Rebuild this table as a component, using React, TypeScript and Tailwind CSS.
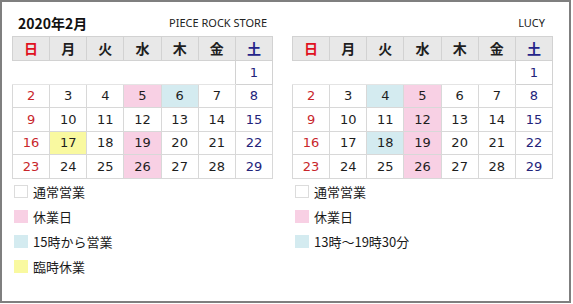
const jp = '"Noto Sans CJK JP", "Noto Sans", sans-serif';
const num = '"DejaVu Sans", Verdana, sans-serif';

type Mark = "pink" | "blue" | "yellow";

const bgOf: Record<Mark, string> = {
  pink: "bg-[#f8d0e4]",
  blue: "bg-[#d4ebf0]",
  yellow: "bg-[#f9f9a0]",
};

const weekdays = ["日", "月", "火", "水", "木", "金", "土"];

const rows = [
  [2, 3, 4, 5, 6, 7, 8],
  [9, 10, 11, 12, 13, 14, 15],
  [16, 17, 18, 19, 20, 21, 22],
  [23, 24, 25, 26, 27, 28, 29],
];

function numColor(col: number) {
  if (col === 0) return "text-[#c8262b]";
  if (col === 6) return "text-[#23237a]";
  return "text-[#1e1e1e]";
}

function Calendar({ marks }: { marks: Record<number, Mark> }) {
  return (
    <table className="w-[261px] table-fixed border-collapse">
      <thead>
        <tr className="h-[24px]">
          {weekdays.map((d, i) => (
            <th
              key={d}
              className={`border border-[#d2d2d2] bg-[#e8e8e8] p-0 text-[14px] font-bold ${
                i === 0 ? "text-[#e01020]" : i === 6 ? "text-[#25258a]" : "text-[#1e1e1e]"
              }`}
              style={{ fontFamily: jp }}
            >
              {d}
            </th>
          ))}
        </tr>
      </thead>
      <tbody style={{ fontFamily: num }} className="text-[13px]">
        <tr className="h-[23.6px]">
          <td colSpan={6} className="border-b border-[#e4e4e4] p-0" />
          <td className={`border border-[#d2d2d2] p-0 text-center ${numColor(6)}`}>1</td>
        </tr>
        {rows.map((r, ri) => (
          <tr key={ri} className="h-[23.6px]">
            {r.map((n, ci) => (
              <td
                key={n}
                className={`border border-[#d8d8d8] p-0 text-center ${numColor(ci)} ${
                  marks[n] ? bgOf[marks[n]] : "bg-white"
                }`}
              >
                {n}
              </td>
            ))}
          </tr>
        ))}
      </tbody>
    </table>
  );
}

function Legend({ items, inset }: { items: { label: string; bg: string }[]; inset: string }) {
  return (
    <div className={`flex flex-col ${inset}`} style={{ fontFamily: jp }}>
      {items.map((it) => (
        <div key={it.label} className="flex h-[25px] items-center gap-[5px]">
          <span className={`h-[13px] w-[14px] ${it.bg}`} />
          <span className="text-[13px] leading-none text-[#1a1a1a]">{it.label}</span>
        </div>
      ))}
    </div>
  );
}

export default function App() {
  return (
    <div className="h-[304px] w-[573px] bg-white">
      <div className="flex h-[303px] w-[571px] gap-[19px] border-2 border-[#7f7f7f] pl-[10px] pt-[10px]">
        <div className="flex w-[261px] flex-col">
          <div className="flex h-[22px] items-center justify-between pl-[6px] pr-[6px]">
            <span className="text-[14px] font-bold text-[#111]" style={{ fontFamily: jp }}>
              2020年2月
            </span>
            <span className="text-[11px] text-[#222]" style={{ fontFamily: '"Noto Sans", sans-serif' }}>
              PIECE ROCK STORE
            </span>
          </div>
          <div className="mt-[2px]">
            <Calendar marks={{ 5: "pink", 6: "blue", 17: "yellow", 19: "pink", 26: "pink" }} />
          </div>
          <Legend
            inset="pl-[2px]"
            items={[
              { label: "通常営業", bg: "border border-[#dcdcdc] bg-white" },
              { label: "休業日", bg: "bg-[#f8d0e4]" },
              { label: "15時から営業", bg: "bg-[#d4ebf0]" },
              { label: "臨時休業", bg: "bg-[#f9f9a0]" },
            ]}
          />
        </div>
        <div className="flex w-[261px] flex-col">
          <div className="flex h-[22px] items-center justify-end pr-[8px]">
            <span className="text-[11px] text-[#222]" style={{ fontFamily: '"Noto Sans", sans-serif' }}>
              LUCY
            </span>
          </div>
          <div className="mt-[2px]">
            <Calendar marks={{ 4: "blue", 5: "pink", 12: "pink", 18: "blue", 19: "pink", 26: "pink" }} />
          </div>
          <Legend
            inset="pl-[3px]"
            items={[
              { label: "通常営業", bg: "border border-[#dcdcdc] bg-white" },
              { label: "休業日", bg: "bg-[#f8d0e4]" },
              { label: "13時～19時30分", bg: "bg-[#d4ebf0]" },
            ]}
          />
        </div>
      </div>
    </div>
  );
}
